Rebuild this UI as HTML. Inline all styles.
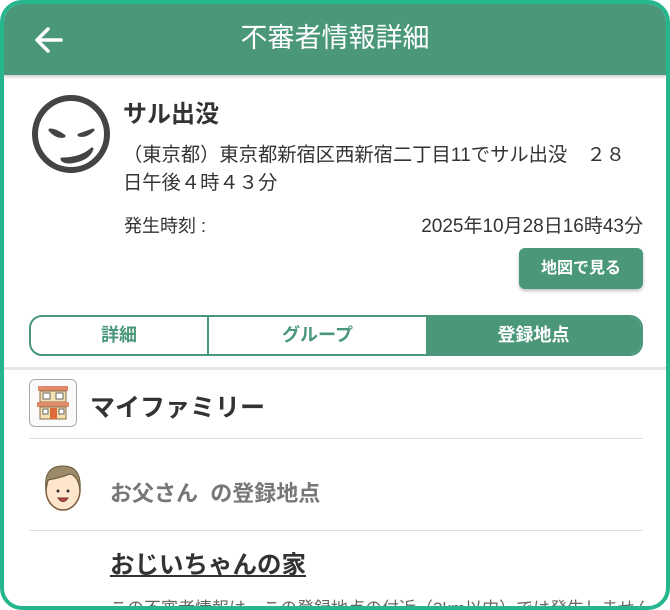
<!DOCTYPE html>
<html><head><meta charset="utf-8"><style>
*{margin:0;padding:0;box-sizing:border-box}
body{width:670px;height:610px;background:#fff;font-family:"Liberation Sans","Noto Sans CJK JP",sans-serif;position:relative;overflow:hidden}
.frame{position:absolute;left:0;top:0;width:670px;height:610px;border:4px solid #25b68e;border-radius:22px;overflow:hidden;background:#fff}
.hdr{position:absolute;left:0;top:0;width:662px;height:71px;background:#4a977a;box-shadow:0 2px 3px rgba(0,0,0,.2)}
.hdr .t{position:absolute;left:0;right:0;top:16px;text-align:center;color:#fff;font-size:27px;line-height:36px}
.abs{position:absolute;white-space:nowrap}
.btn{position:absolute;left:515px;top:244px;width:124px;height:41px;background:#4a977a;color:#fff;border-radius:6px;font-weight:bold;font-size:16px;text-align:center;line-height:41px;box-shadow:0 2px 3px rgba(0,0,0,.25)}
.tabs{position:absolute;left:25px;top:311px;width:614px;height:41px;border:2px solid #4a977a;border-radius:13px;overflow:hidden;display:flex}
.tabs div{text-align:center;line-height:37px;font-weight:bold;font-size:18px;color:#4a977a}
.line{position:absolute;left:25px;width:614px;height:1px;background:#ddd}
</style></head><body>
<div class="frame">
<div class="hdr">
<svg style="position:absolute;left:29px;top:22px" width="32" height="28" viewBox="0 0 32 28"><path d="M28 14H5M15 3L4 14l11 11" stroke="#fff" stroke-width="3.5" fill="none" stroke-linecap="round" stroke-linejoin="round"/></svg>
<div class="t">不審者情報詳細</div>
</div>
<svg class="abs" style="left:22px;top:85px" width="92" height="92" viewBox="0 0 92 92">
<circle cx="45" cy="45" r="36" stroke="#444" stroke-width="6" fill="none"/>
<path d="M24 41Q30 41 38 47Q31 49 24 41Z" stroke="#444" stroke-width="3" fill="#444" stroke-linejoin="round"/>
<path d="M67 41Q61 43 53 46Q60 48 67 41Z" stroke="#444" stroke-width="3" fill="#444" stroke-linejoin="round"/>
<path d="M36 70Q55 70 66 60Q62 71 44 73Q37 73 36 70Z" stroke="#444" stroke-width="3" fill="#444" stroke-linejoin="round"/>
</svg>
<div class="abs" style="left:119px;top:90px;font-size:24px;font-weight:bold;color:#333">サル出没</div>
<div class="abs" style="left:119px;top:138px;font-size:19.3px;color:#333;line-height:28px">（東京都）東京都新宿区西新宿二丁目11でサル出没　２８<br>日午後４時４３分</div>
<div class="abs" style="left:120px;top:208px;font-size:18px;color:#333">発生時刻 :</div>
<div class="abs" style="right:23px;top:207px;font-size:19px;color:#333">2025年10月28日16時43分</div>
<div class="btn">地図で見る</div>
<div class="tabs"><div style="width:178px;border-right:2px solid #4a977a">詳細</div><div style="width:217px">グループ</div><div style="flex:1;background:#4a977a;color:#fff">登録地点</div></div>
<div style="position:absolute;left:0;top:363px;width:662px;height:3px;background:#e6e6e6"></div>
<div style="position:absolute;left:25px;top:375px;width:48px;height:48px;border:1px solid #aaa;border-radius:6px;background:#fafafa">
<svg width="46" height="46" viewBox="0 0 46 46"><rect x="8" y="6" width="30" height="5" fill="#e08a6a"/><rect x="10" y="11" width="26" height="11" fill="#f4e3b0" stroke="#8a6a4a"/><rect x="7" y="22" width="32" height="5" fill="#e08a6a"/><rect x="10" y="27" width="26" height="12" fill="#f4e3b0" stroke="#8a6a4a"/><rect x="20" y="28" width="7" height="11" fill="#e06a3a"/><rect x="13" y="13" width="7" height="6" fill="#fff" stroke="#666"/><rect x="26" y="13" width="7" height="6" fill="#fff" stroke="#666"/><rect x="13" y="29" width="5" height="5" fill="#fff" stroke="#666"/><rect x="29" y="29" width="5" height="5" fill="#fff" stroke="#666"/></svg></div>
<div class="abs" style="left:86px;top:384px;font-size:25px;font-weight:bold;color:#333">マイファミリー</div>
<div class="line" style="top:434px"></div>
<svg class="abs" style="left:36px;top:456px" width="46" height="56" viewBox="0 0 46 56"><ellipse cx="23" cy="30" rx="17" ry="20" fill="#fde6cc" stroke="#7a5a3a" stroke-width="1.5"/><path d="M6 30Q3 6 23 6Q42 6 40 30Q38 16 30 14Q20 18 8 20Z" fill="#9a8a6a" stroke="#6a5a3a"/><circle cx="18" cy="31" r="1.5" fill="#333"/><circle cx="28" cy="31" r="1.5" fill="#333"/><path d="M18 38Q23 45 28 38Z" fill="#c44" stroke="#633"/></svg>
<div class="abs" style="left:106px;top:472px;font-size:22px;font-weight:bold;color:#777">お父さん&nbsp; の登録地点</div>
<div class="line" style="top:526px"></div>
<div class="abs" style="left:106px;top:542px;font-size:24.5px;font-weight:bold;color:#333;text-decoration:underline">おじいちゃんの家</div>
<div class="abs" style="left:106px;top:590px;font-size:17px;color:#666">この不審者情報は、この登録地点の付近（3km以内）では発生しません</div>
</div>
</body></html>
